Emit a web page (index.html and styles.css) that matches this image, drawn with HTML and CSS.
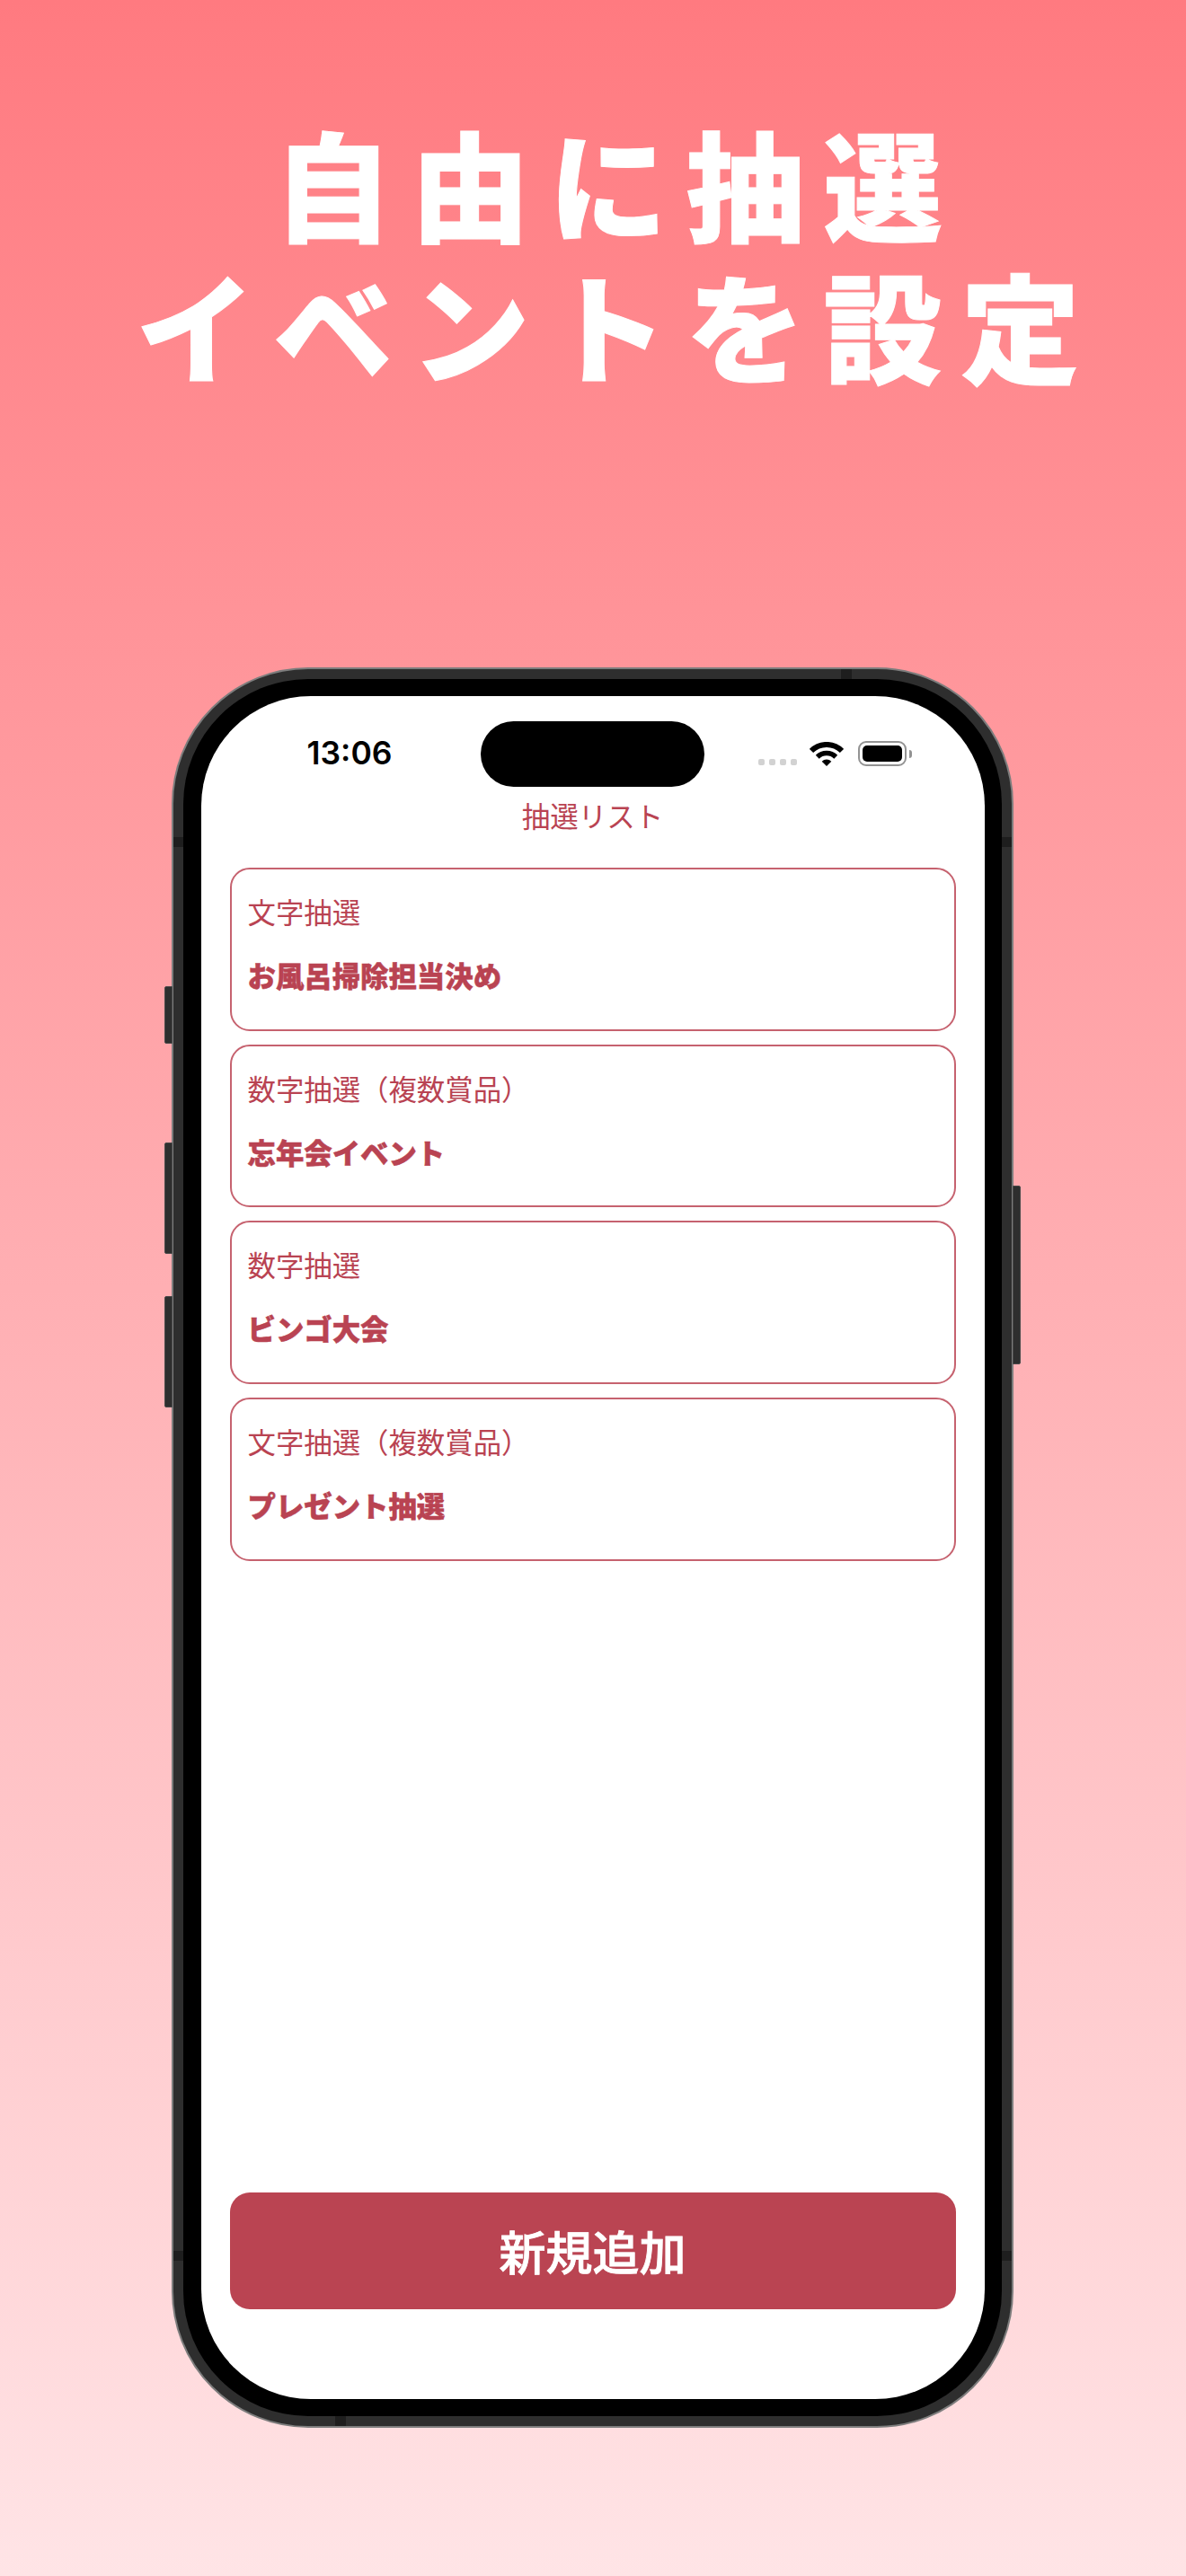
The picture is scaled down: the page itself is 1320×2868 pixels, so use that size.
FILE: index.html
```html
<!DOCTYPE html>
<html lang="ja">
<head>
<meta charset="utf-8">
<title>自由に抽選</title>
<link rel="stylesheet" href="styles.css">
</head>
<body>
<main class="page">
  <h1 class="headline">
    <span class="headline-line">自由に抽選</span>
    <span class="headline-line">イベントを設定</span>
  </h1>
  <div class="phone">
    <span class="side side-mute"></span>
    <span class="side side-up"></span>
    <span class="side side-down"></span>
    <span class="side side-power"></span>
    <span class="band band-left-top"></span>
    <span class="band band-right-top"></span>
    <span class="band band-left-bottom"></span>
    <span class="band band-right-bottom"></span>
    <span class="band band-top"></span>
    <span class="band band-bottom"></span>
    <div class="bezel">
      <div class="screen">
        <div class="island"></div>
        <div class="status">
          <span class="time">13:06</span>
          <div class="status-icons">
            <div class="dots"><i></i><i></i><i></i><i></i></div>
            <svg class="wifi" viewBox="0 0 38 27" aria-hidden="true">
              <path d="M2 10A24 24 0 0 1 36 10" fill="none" stroke="#000" stroke-width="6"/>
              <path d="M8.75 16.75A14.5 14.5 0 0 1 29.25 16.75" fill="none" stroke="#000" stroke-width="5.5"/>
              <path d="M19 27L13.7 21.7A7.5 7.5 0 0 1 24.3 21.7Z" fill="#000"/>
            </svg>
            <div class="battery"><div class="battery-fill"></div></div>
            <span class="battery-knob"></span>
          </div>
        </div>
        <div class="nav-title">抽選リスト</div>
        <div class="list">
          <div class="card"><div class="card-type">文字抽選</div><div class="card-name">お風呂掃除担当決め</div></div>
          <div class="card"><div class="card-type">数字抽選（複数賞品）</div><div class="card-name">忘年会イベント</div></div>
          <div class="card"><div class="card-type">数字抽選</div><div class="card-name">ビンゴ大会</div></div>
          <div class="card"><div class="card-type">文字抽選（複数賞品）</div><div class="card-name">プレゼント抽選</div></div>
        </div>
        <button class="add-button" type="button">新規追加</button>
      </div>
    </div>
  </div>
</main>
</body>
</html>
```

FILE: styles.css
```css
* { box-sizing: border-box; }
html, body { margin: 0; padding: 0; }
body { font-family: "Noto Sans CJK JP", "Noto Sans", sans-serif; }

.page {
  width: 1320px;
  height: 2868px;
  overflow: hidden;
  background: linear-gradient(180deg, #ff7a80 0%, #ffe4e6 100%);
  padding-top: 123px;
}

.headline {
  margin: 0 0 0 54px;
  color: #fff;
  font-size: 132px;
  font-weight: 900;
  line-height: 158px;
  letter-spacing: 21px;
  text-align: center;
  -webkit-text-stroke: 1px #fff;
}
.headline-line { display: block; }

.phone {
  position: relative;
  width: 937px;
  height: 1960px;
  margin: 304px 0 0 191px;
  padding: 11px;
  border: 2px solid #7d7d7d;
  border-radius: 152px;
  background: #2e2e2e;
}

.side {
  position: absolute;
  width: 9px;
  background: #2e2e2e;
  border: 1px solid #4a4a4a;
}
.side-mute  { left: -10px; top: 353px; height: 64px;  border-radius: 2px 0 0 2px; }
.side-up    { left: -10px; top: 527px; height: 124px; border-radius: 2px 0 0 2px; }
.side-down  { left: -10px; top: 698px; height: 124px; border-radius: 2px 0 0 2px; }
.side-power { right: -10px; top: 575px; height: 199px; border-radius: 0 2px 2px 0; }

.band { position: absolute; background: #1e1e1e; }
.band-left-top     { left: 0; top: 187px; width: 11px; height: 11px; }
.band-right-top    { right: 0; top: 187px; width: 11px; height: 11px; }
.band-left-bottom  { left: 0; top: 1761px; width: 11px; height: 11px; }
.band-right-bottom { right: 0; top: 1761px; width: 11px; height: 11px; }
.band-top    { left: 743px; top: 0; width: 12px; height: 11px; }
.band-bottom { left: 180px; bottom: 0; width: 12px; height: 11px; }

.bezel {
  height: 100%;
  padding: 19px 19.5px;
  border-radius: 139px;
  background: #000;
}

.screen {
  position: relative;
  display: flex;
  flex-direction: column;
  height: 100%;
  border-radius: 122px;
  background: #fff;
  overflow: hidden;
  color: #b94352;
}

.island {
  position: absolute;
  left: 311px;
  top: 28px;
  width: 249px;
  height: 73px;
  border-radius: 37px;
  background: #000;
}

.status {
  display: flex;
  align-items: center;
  justify-content: space-between;
  height: 28px;
  margin-top: 50px;
  padding: 0 81px 0 118px;
  color: #000;
}
.time {
  font-family: Inter, "Liberation Sans", sans-serif;
  font-size: 35.5px;
  font-weight: 600;
  line-height: 28px;
}
.status-icons { display: flex; align-items: center; height: 28px; }
.dots { display: flex; gap: 5px; margin: 19px 14px 0 0; }
.dots i { display: block; width: 7px; height: 7px; border-radius: 2px; background: #d2d2d2; }
.wifi { display: block; width: 38px; height: 27px; margin-right: 16px; }
.battery {
  width: 54px;
  height: 28px;
  padding: 3px;
  border: 2px solid #939393;
  border-radius: 9px;
}
.battery-fill { height: 100%; border-radius: 5px; background: #000; }
.battery-knob {
  display: block;
  width: 3px;
  height: 9px;
  margin-left: 3px;
  border-radius: 0 3px 3px 0;
  background: #939393;
}

.nav-title {
  margin-top: 34px;
  font-size: 31.5px;
  line-height: 40px;
  text-align: center;
}

.list {
  display: flex;
  flex: 1;
  flex-direction: column;
  gap: 15.2px;
  margin-top: 39px;
  padding: 0 32px;
}
.card {
  display: flex;
  flex-direction: column;
  gap: 31px;
  height: 181.5px;
  padding: 27px 18px 0;
  border: 2px solid #c6626f;
  border-radius: 22px;
}
.card-type { font-size: 31.4px; line-height: 40px; }
.card-name {
  font-size: 31.4px;
  font-weight: 900;
  line-height: 40px;
  -webkit-text-stroke: 0.5px #b94352;
}

.add-button {
  display: block;
  height: 130px;
  margin: 0 32px 100px;
  border: 0;
  border-radius: 22px;
  background: #ba4452;
  color: #fff;
  font-family: inherit;
  font-size: 52px;
  font-weight: 500;
  line-height: 1;
  -webkit-text-stroke: 0.8px #fff;
}
```
